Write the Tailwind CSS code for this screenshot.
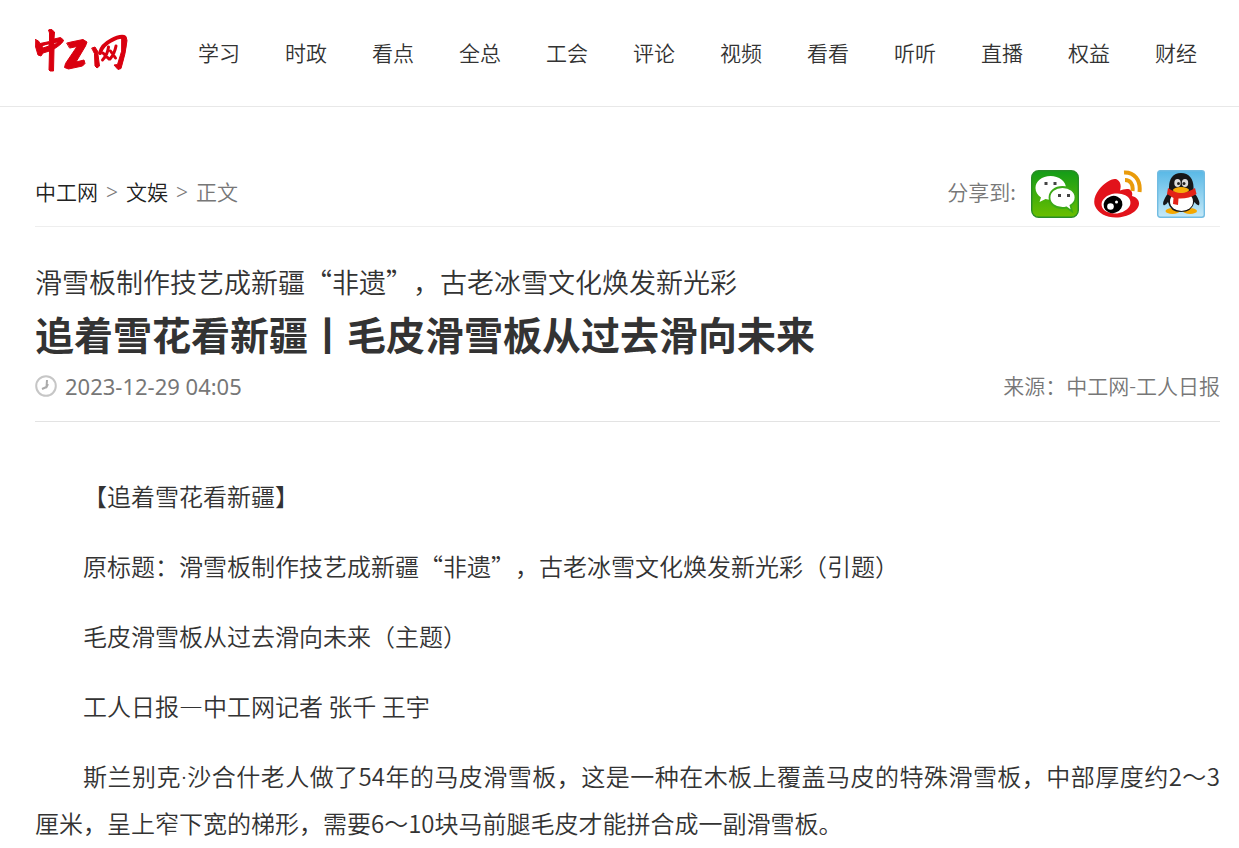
<!DOCTYPE html>
<html lang="zh-CN">
<head>
<meta charset="utf-8">
<meta name="viewport" content="width=device-width, initial-scale=1">
<title>追着雪花看新疆丨毛皮滑雪板从过去滑向未来</title>
<script src="https://cdn.jsdelivr.net/npm/@tailwindcss/browser@4"></script>
</head>
<body class="bg-white text-[#333] font-['Noto_Sans_CJK_SC',sans-serif] font-[350] [text-spacing-trim:space-all]">
<header class="border-b border-[#e8e8e8] h-[107px] pl-[35px] pr-[42px] flex items-center">
  <a href="#" aria-label="中工网" class="shrink-0 mr-[70px] -mt-1">
    <svg class="block w-[93px] h-[44px]" viewBox="35 29 93 44" fill="none" stroke="#d9000f" stroke-linecap="round" stroke-linejoin="round">
      <path fill="#d9000f" stroke-width="1" d="M35.500 39.500l3 1.500 1.500 2.500 9.500-2V33l-1-3 2.500-1 3.500 3-.5 7 6.500-1.500 3 2.500q0 3-9.500 9l-.5 22-3.500 0-1-1 .5-19-6.500 2-2 3-3-1-2.500-8.500ZM42 46l1 2 6-2v-2ZM54 43v2l4-3Z"/>
      <path fill="#d9000f" stroke-width="1" d="M67 43l4-1 12-2.500 4 2.500-1.500 4L76 62l8-2 1 3.500-2.500 2.500-14 3-4-1.500 1-4 11.500-17-7 1.500Z"/>
      <path fill="#d9000f" stroke-width="1" d="M92 48l3-1 2.500 4 2 15-2.500 2-2-2-.5-12Z"/>
      <path stroke-width="4" d="M100 53q2-8 11-12.500q8-4.500 13-3.500"/>
      <path fill="#d9000f" stroke-width="1" d="M122 37l4-.5 1 4q-1 12-6 28l-3 1-4-4.500 3.500-.5 4-13Z"/>
      <path stroke-width="3" d="M108.500 47q-1 8-6 13M103 53l6 6M116 46q-1.500 8-6 13M110.500 51l5 7"/>
    </svg>
  </a>
  <nav class="flex flex-1 justify-between -mt-0.5 text-[21px] leading-8 whitespace-nowrap">
    <a href="#">学习</a><a href="#">时政</a><a href="#">看点</a><a href="#">全总</a><a href="#">工会</a><a href="#">评论</a><a href="#">视频</a><a href="#">看看</a><a href="#">听听</a><a href="#">直播</a><a href="#">权益</a><a href="#">财经</a>
  </nav>
</header>
<main class="pl-[35px] pr-[19px] pt-[63px]">
  <div class="flex items-center justify-between border-b border-[#eee] pb-2 text-[21px] leading-8 text-[#777]">
    <nav aria-label="面包屑" class="flex items-baseline gap-2 -mt-1.5">
      <a href="#" class="text-[#222]">中工网</a><span class="font-['Noto_Sans']">&gt;</span><a href="#" class="text-[#222]">文娱</a><span class="font-['Noto_Sans']">&gt;</span><span>正文</span>
    </nav>
    <div class="flex items-center gap-[15px] pr-[15px]">
      <span class="-mt-1.5">分享到:</span>
      <a href="#" aria-label="分享到微信">
        <svg class="block size-12" viewBox="0 0 48 48">
          <defs><linearGradient id="wx" x2="0" y2="1"><stop stop-color="#139c18"/><stop offset="1" stop-color="#6abf00"/></linearGradient></defs>
          <rect x=".7" y=".7" width="46.600" height="46.600" rx="7" fill="url(#wx)" stroke="#278d25" stroke-width="1.400"/>
          <path fill="#fff" d="M19.500 6C11 6 4.500 11 4.500 18c0 4 2 7 5.500 9.500L8.500 32l6-3q3 .8 5 .7C28 29.500 35 25 35 18S28 6 19.500 6Z"/>
          <path fill="#fff" stroke="#3ba916" stroke-width="1.800" d="M31.500 17C24 17 18.500 21.500 18.500 27.500S24 38 31.500 38q2 0 4-.6l5.500 4-1.500-6q5-3 5-8C44.500 21.500 39 17 31.500 17Z"/>
          <path fill="#444" d="M13.500 12h3v3h-3zM22.500 12h3v3h-3zM27 24h3v3h-3zM36 24h3v3h-3z"/>
        </svg>
      </a>
      <a href="#" aria-label="分享到微博">
        <svg class="block size-12" viewBox="0 0 48 48">
          <path fill="#e2131b" d="M23 9.500c-4-2-12 2.500-18 10C1 24.500-1 31 1 36c3 7 11 11.500 21 11.500 12 0 23-6.500 23-14 0-4-3-6.500-7-7.500 1-4-1-7-5-7q-4 0-7 1.500c1.500-5 .5-9-3-11Z"/>
          <ellipse cx="22" cy="33.500" rx="14.500" ry="10" fill="#fff" transform="rotate(-7 22 33.500)"/>
          <ellipse cx="19" cy="34.500" rx="9.500" ry="8.500" fill="#000" transform="rotate(-18 19 34.500)"/>
          <circle cx="16.500" cy="36.500" r="3.300" fill="#fff"/><circle cx="22.500" cy="32" r="1.500" fill="#fff"/>
          <path fill="none" stroke="#e99b0b" stroke-width="4" d="M30 2.500C40 2 47 10 45.500 22M31 10c5 0 8.500 4 7.500 11"/>
        </svg>
      </a>
      <a href="#" aria-label="分享到QQ">
        <svg class="block size-12" viewBox="0 0 48 48">
          <defs><linearGradient id="qq" x2="0" y2="1"><stop stop-color="#58b8e6"/><stop offset="1" stop-color="#c5e9f8"/></linearGradient></defs>
          <rect x=".7" y=".7" width="46.600" height="46.600" rx="2.500" fill="url(#qq)" stroke="#72bce2" stroke-width="1.400"/>
          <ellipse cx="15.500" cy="41" rx="7" ry="3" fill="#f5a800"/><ellipse cx="33" cy="41" rx="7" ry="3" fill="#f5a800"/>
          <path fill="#171719" d="M24 3C16 3 12 9 12 17v5C8 27 5 33 6.500 35q2 1 4.500-3 2 10 13 10t13.500-10q2.500 4 4.500 3C43.500 33 41 27 36.500 22v-5C36.500 9 32 3 24 3Z"/>
          <ellipse cx="24.500" cy="31.500" rx="11.500" ry="9.500" fill="#fff"/>
          <ellipse cx="20.500" cy="13" rx="3.200" ry="4" fill="#ddd"/><ellipse cx="28" cy="13" rx="3.200" ry="4" fill="#ddd"/>
          <circle cx="21.500" cy="13.500" r="1.500" fill="#222"/><circle cx="27" cy="13.500" r="1.500" fill="#222"/>
          <path fill="#e32217" d="M11 18q13 9 27 0l1.500 6q-8 5-18 4.500l-.5 6.500-5-1 .500-6-6.500-4Z"/>
          <ellipse cx="24" cy="20" rx="8" ry="3" fill="#f7ac08"/>
        </svg>
      </a>
    </div>
  </div>
  <p class="mt-[35px] text-[27px] leading-10">滑雪板制作技艺成新疆“非遗”，古老冰雪文化焕发新光彩</p>
  <h1 class="mt-px text-[39px] leading-[60px] font-bold">追着雪花看新疆丨毛皮滑雪板从过去滑向未来</h1>
  <div class="flex items-center justify-between border-b border-[#e3e3e3] pt-1.5 pb-[19px] text-[21px] leading-8 text-[#777]">
    <div class="flex items-center gap-2">
      <svg class="size-[22px]" viewBox="0 0 22 22" fill="none" stroke="#c6c6c6" stroke-width="2" aria-hidden="true"><circle cx="11" cy="11" r="9.800"/><path stroke="#aaa" d="M12 5l-.5 7-4.500 2M13 9l-2 4"/></svg>
      <time datetime="2023-12-29T04:05" class="font-['Noto_Sans'] font-normal text-[22px]">2023-12-29 04:05</time>
    </div>
    <span>来源：中工网<span class="font-['Noto_Sans']">-</span>工人日报</span>
  </div>
  <article class="mt-[51px] flex flex-col gap-6 text-[24px] leading-[46px] text-justify indent-12">
    <p>【追着雪花看新疆】</p>
    <p>原标题：滑雪板制作技艺成新疆“非遗”，古老冰雪文化焕发新光彩（引题）</p>
    <p>毛皮滑雪板从过去滑向未来（主题）</p>
    <p>工人日报—中工网记者 张千 王宇</p>
    <p>斯兰别克<span class="font-['Noto_Sans']">·</span>沙合什老人做了54年的马皮滑雪板，这是一种在木板上覆盖马皮的特殊滑雪板，中部厚度约2～3厘米，呈上窄下宽的梯形，需要6～10块马前腿毛皮才能拼合成一副滑雪板。</p>
  </article>
</main>
</body>
</html>
